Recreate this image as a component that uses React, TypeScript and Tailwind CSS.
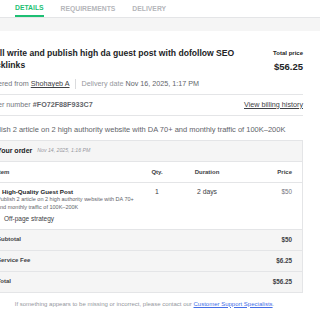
const summary = [
  { label: "Subtotal", value: "$50" },
  { label: "Service Fee", value: "$6.25" },
  { label: "Total", value: "$56.25" },
];

function Tabs() {
  return (
    <div className="flex h-[18px] gap-[17px] border-b border-[#e4e5e7] pl-[15px] text-[6.8px] font-bold">
      <div className="flex h-[17px] items-center border-b-2 border-[#1dbf73] pt-[2px] text-[#1dbf73]">DETAILS</div>
      <div className="flex h-[17px] items-center pt-[2px] text-[#b5b6ba]">REQUIREMENTS</div>
      <div className="flex h-[17px] items-center pt-[2px] text-[#b5b6ba]">DELIVERY</div>
    </div>
  );
}

function OrderTable() {
  return (
    <div className="border border-[#e4e5e7] text-[#404145]">
      <div className="flex h-[21px] items-center gap-[5px] border-b border-[#e4e5e7] bg-[#f5f5f5] px-[10px]">
        <span className="text-[7px] font-bold text-[#222325]">Your order</span>
        <span className="text-[5.2px] italic text-[#95979d]">Nov 14, 2025, 1:16 PM</span>
      </div>
      <div className="grid h-[21px] grid-cols-[144px_32px_68px_1fr] items-center border-b border-[#e4e5e7] px-[10px] text-[6px] font-bold">
        <span>Item</span>
        <span className="text-center">Qty.</span>
        <span className="text-center">Duration</span>
        <span className="text-right">Price</span>
      </div>
      <div className="grid grid-cols-[144px_32px_68px_1fr] border-b border-[#e4e5e7] px-[10px] pb-[6px] pt-[5px]">
        <div>
          <p className="ml-[5px] text-[6.2px] font-bold leading-[8px] text-[#222325]">High-Quality Guest Post</p>
          <p className="text-[5.5px] leading-[7.5px] text-[#62646a]">
            Publish 2 article on 2 high authority website with DA 70+
            <br />
            and monthly traffic of 100K–200K
          </p>
          <p className="ml-[7px] mt-[3.5px] text-[6.5px] leading-[8px]">Off-page strategy</p>
        </div>
        <span className="text-center text-[6.8px] leading-[8px]">1</span>
        <span className="text-center text-[6.8px] leading-[8px]">2 days</span>
        <span className="text-right text-[6.3px] leading-[8px] text-[#74767e]">$50</span>
      </div>
      {summary.map((row, i) => (
        <div
          key={row.label}
          className={
            i < summary.length - 1
              ? "flex h-[21px] items-center justify-between border-b border-[#e4e5e7] bg-[#f5f5f5] px-[10px] text-[6px] font-bold"
              : "flex h-[20px] items-center justify-between bg-[#f5f5f5] px-[10px] text-[6px] font-bold"
          }
        >
          <span>{row.label}</span>
          <span className="text-[6.3px]">{row.value}</span>
        </div>
      ))}
    </div>
  );
}

export default function App() {
  return (
    <div className="h-[320px] w-[320px] overflow-hidden bg-white font-['Liberation_Sans',Arial,sans-serif] text-[#404145]">
      <Tabs />
      <div className="h-[13px] bg-[#f5f5f5]" />
      <div className="ml-[-14px] w-[317px]">
        <div className="flex items-start justify-between pt-[17px]">
          <h1 className="text-[8.6px] font-bold leading-[11.5px] text-[#222325]">
            I will write and publish high da guest post with dofollow SEO
            <br />
            backlinks
          </h1>
          <div className="flex flex-col items-end pt-[1px]">
            <span className="text-[6px] font-bold leading-[8px] text-[#222325]">Total price</span>
            <span className="mt-[4px] text-[9.5px] font-bold leading-[12px] text-[#222325]">$56.25</span>
          </div>
        </div>
        <div className="mt-[6px] flex items-center border-b border-[#e4e5e7] pb-[5px] text-[7.2px] leading-[10px]">
          <span className="text-[#74767e]">Ordered from</span>
          <span className="ml-[2px] text-[#404145] underline">Shohayeb A</span>
          <span className="mx-[5.5px] h-[10px] w-px bg-[#dadbdd]" />
          <span className="text-[#95979d]">Delivery date</span>
          <span className="ml-[2px] font-medium text-[#62646a]">Nov 16, 2025, 1:17 PM</span>
        </div>
        <div className="flex h-[21px] items-center justify-between border-b border-[#e4e5e7] text-[7.2px]">
          <div>
            <span className="text-[#74767e]">Order number </span>
            <span className="font-bold text-[#62646a]">#FO72F88F933C7</span>
          </div>
          <span className="font-medium text-[#404145] underline">View billing history</span>
        </div>
        <p className="pb-[5px] pt-[9px] text-[7.5px] leading-[10px] text-[#62646a]">
          Publish 2 article on 2 high authority website with DA 70+ and monthly traffic of 100K–200K
        </p>
        <OrderTable />
        <p className="mt-[7px] text-center text-[6px] text-[#95979d]">
          If something appears to be missing or incorrect, please contact our{" "}
          <span className="text-[#446ee7] underline">Customer Support Specialists</span>.
        </p>
      </div>
    </div>
  );
}
